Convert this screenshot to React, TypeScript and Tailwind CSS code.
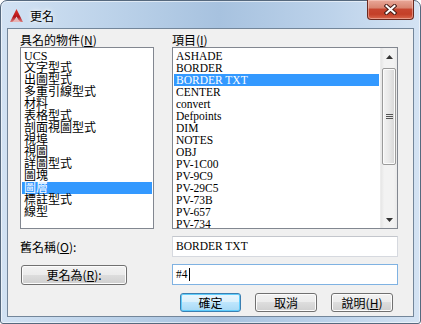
import React from 'react';

const namedObjects = [
  'UCS', '文字型式', '出圖型式', '多重引線型式', '材料', '表格型式', '剖面視圖型式',
  '視埠', '視圖', '詳圖型式', '圖塊', '圖層', '標註型式', '線型',
];

const items = [
  'ASHADE', 'BORDER', 'BORDER TXT', 'CENTER', 'convert', 'Defpoints', 'DIM', 'NOTES',
  'OBJ', 'PV-1C00', 'PV-9C9', 'PV-29C5', 'PV-73B', 'PV-657', 'PV-734',
];

const listFont = "font-['Liberation_Serif','Noto_Sans_CJK_TC',serif]";

function ListRows({ rows, selected }: { rows: string[]; selected: string }) {
  return (
    <div className="flex-1 min-w-0 px-px pt-[2px]">
      {rows.map((r) => (
        <div
          key={r}
          className={`h-[12px] leading-[12px] pl-[2px] whitespace-nowrap ${
            r === selected ? 'bg-[#3399ff] text-white' : 'text-black'
          }`}
        >
          {r}
        </div>
      ))}
    </div>
  );
}

function ScrollBar() {
  return (
    <div className="w-[17px] flex flex-col bg-[linear-gradient(90deg,#e6e6e6,#f2f2f2_20%,#f2f2f2_80%,#e9e9e9)] border-l border-[#ececec]">
      <div className="h-[17px] flex items-center justify-center">
        <svg width="7" height="4" viewBox="0 0 7 4">
          <path d="M3.5 0 L7 4 L0 4 Z" fill="#333" />
        </svg>
      </div>
      <div className="flex-1 px-px pt-[3px]">
        <div className="h-[97px] rounded-[2px] border border-[#9a9a9a] bg-[linear-gradient(90deg,#f3f3f3,#e8e8e8_50%,#d6d6d6)] shadow-[inset_0_0_0_1px_#fbfbfb] flex flex-col items-center justify-center gap-[1px]">
          <div className="w-[7px] h-px bg-[#555]" />
          <div className="w-[7px] h-px bg-[#555]" />
          <div className="w-[7px] h-px bg-[#555]" />
        </div>
      </div>
      <div className="h-[17px] flex items-center justify-center">
        <svg width="7" height="4" viewBox="0 0 7 4">
          <path d="M0 0 L7 0 L3.5 4 Z" fill="#333" />
        </svg>
      </div>
    </div>
  );
}

function Button({ children, primary, className = '' }: { children: React.ReactNode; primary?: boolean; className?: string }) {
  return (
    <div
      className={`flex items-center justify-center rounded-[3px] border text-[12px] leading-[12px] text-black ${
        primary
          ? 'border-[#3c7fb1] bg-[linear-gradient(#eaf6fd,#d9f0fc_50%,#bee6fd_50%,#a7d9f5)] shadow-[inset_0_0_0_1px_#5fcdfc]'
          : 'border-[#707070] bg-[linear-gradient(#f2f2f2,#ebebeb_50%,#dddddd_50%,#cfcfcf)] shadow-[inset_0_0_0_1px_#fcfcfc]'
      } ${className}`}
    >
      {children}
    </div>
  );
}

export default function App() {
  return (
    <div className="w-[421px] h-[324px] bg-white font-['Noto_Sans_CJK_TC',sans-serif] text-[12px] text-black">
      <div className="w-full h-full flex flex-col rounded-t-[7px] rounded-b-[3px] border border-[#56697e] bg-[linear-gradient(90deg,#d2e2f3_0%,#b9d0e8_30%,#a7c2df_52%,#bcd2ea_78%,#d4e3f3_100%)] shadow-[inset_0_0_0_1px_rgba(255,255,255,0.55)] px-[6px] pb-[6px]">
        {/* title bar */}
        <div className="h-[27px] flex items-start justify-between">
          <div className="flex items-center gap-[6px] pl-[2px] pt-[7px]">
            <svg width="15" height="15" viewBox="0 0 15 15">
              <defs>
                <linearGradient id="acad" x1="0" y1="0" x2="0" y2="1">
                  <stop offset="0" stopColor="#e0352b" />
                  <stop offset="0.6" stopColor="#b3141a" />
                  <stop offset="1" stopColor="#d98080" />
                </linearGradient>
              </defs>
              <path d="M7.5 1 L14 14 L10.2 14 L7.5 8.6 L4.8 14 L1 14 Z" fill="url(#acad)" />
              <path d="M3.2 14 L7.5 9.8 L11.8 14 Z" fill="#e8b4b4" />
            </svg>
            <span className="text-[12px] leading-[14px] text-black [text-shadow:0_0_6px_#fff,0_0_3px_#fff]">更名</span>
          </div>
          <div className="-mt-px w-[47px] h-[20px] rounded-b-[4px] border border-t-0 border-[#6b2a20] bg-[linear-gradient(#e9a899,#d98672_40%,#c7452f_50%,#c43f28_75%,#d9674c)] shadow-[inset_0_0_0_1px_rgba(255,220,210,0.45)] flex items-center justify-center">
            <svg width="13" height="11" viewBox="0 0 13 11">
              <path d="M2.5 2 L10.5 9 M10.5 2 L2.5 9" stroke="#4a1e18" strokeWidth="4" strokeLinecap="square" />
              <path d="M2.5 2 L10.5 9 M10.5 2 L2.5 9" stroke="#ffffff" strokeWidth="2" strokeLinecap="square" />
            </svg>
          </div>
        </div>

        {/* client area */}
        <div className="flex-1 border border-[#73869a] bg-[#f0f0f0] pl-[12px] pr-[15px] pt-[4px] flex flex-col">
          <div className="grid grid-cols-[134px_226px] gap-x-[18px]">
            <div className="h-[14px] leading-[14px]">具名的物件(<u>N</u>)</div>
            <div className="h-[14px] leading-[14px]">項目(<u>I</u>)</div>
            <div className={`h-[182px] border border-[#828790] bg-white overflow-hidden flex ${listFont} text-[12px]`}>
              <ListRows rows={namedObjects} selected="圖層" />
            </div>
            <div className={`h-[182px] border border-[#828790] bg-white overflow-hidden flex ${listFont} text-[11.5px]`}>
              <ListRows rows={items} selected="BORDER TXT" />
              <ScrollBar />
            </div>
          </div>

          <div className="mt-[7px] grid grid-cols-[134px_226px] gap-x-[18px] items-center">
            <div className="leading-[14px]">舊名稱(<u>O</u>):</div>
            <div className={`h-[21px] border border-[#d6d9df] border-t-[#c3c6cc] bg-white pl-[3px] flex items-center ${listFont} text-[11.5px]`}>
              BORDER TXT
            </div>
          </div>

          <div className="mt-[7px] grid grid-cols-[134px_226px] gap-x-[18px] h-[21px]">
            <Button className="self-end ml-px w-[106px] h-[20px]">
              更名為(<u>R</u>):
            </Button>
            <div className={`h-[21px] border border-[#7fb2e2] bg-white pl-[3px] flex items-center ${listFont} text-[11.5px]`}>
              #4
              <span className="ml-px w-px h-[13px] bg-black" />
            </div>
          </div>

          <div className="mt-[8px] flex justify-end gap-[14px] pr-[5px]">
            <Button primary className="w-[61px] h-[19px]">確定</Button>
            <Button className="w-[62px] h-[19px]">取消</Button>
            <Button className="w-[62px] h-[19px]">
              說明(<u>H</u>)
            </Button>
          </div>
        </div>
      </div>
    </div>
  );
}
